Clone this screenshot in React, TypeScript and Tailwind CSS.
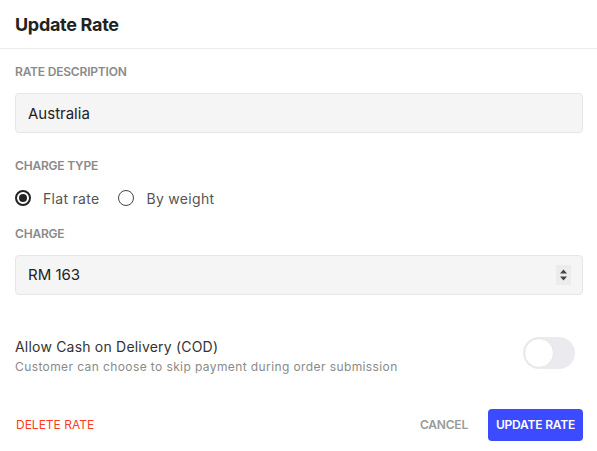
import React, { useState } from 'react';

const App: React.FC = () => {
  const [chargeType, setChargeType] = useState<'flat' | 'weight'>('flat');
  const [cod, setCod] = useState(false);

  return (
    <div className="w-[597px] h-[451px] bg-white font-['Inter',sans-serif] text-[#222]">
      <div className="h-[49px] border-b border-[#ececec] px-[15px] flex items-center">
        <h1 className="text-[18px] font-bold text-[#222] tracking-[-0.3px]">Update Rate</h1>
      </div>

      <div className="px-[15px]">
        <label className="block mt-[15px] h-4 leading-4 text-[12px] font-semibold text-[#8a8a8a] tracking-[-0.2px]">
          RATE DESCRIPTION
        </label>
        <input
          defaultValue="Australia"
          className="mt-[13px] block w-[568px] h-10 px-3 bg-[#f5f5f5] border border-[#e6e6e6] rounded-[4px] text-[15px] text-[#222] outline-none"
        />

        <label className="block mt-[25px] h-4 leading-4 text-[12px] font-semibold text-[#8a8a8a] tracking-[-0.2px]">
          CHARGE TYPE
        </label>
        <div className="mt-[14px] h-5 flex items-center">
          <button onClick={() => setChargeType('flat')} className="flex items-center">
            <span className="w-4 h-4 rounded-full border-2 border-[#222] flex items-center justify-center">
              {chargeType === 'flat' && <span className="w-2 h-2 rounded-full bg-[#222]" />}
            </span>
            <span className="ml-3 text-[14px] text-[#555] tracking-[0.3px]">Flat rate</span>
          </button>
          <button onClick={() => setChargeType('weight')} className="ml-[19px] flex items-center">
            <span className="w-4 h-4 rounded-full border-[1.5px] border-[#444] flex items-center justify-center">
              {chargeType === 'weight' && <span className="w-2 h-2 rounded-full bg-[#222]" />}
            </span>
            <span className="ml-3 text-[14px] text-[#555] tracking-[0.3px]">By weight</span>
          </button>
        </div>

        <label className="block mt-[18px] h-4 leading-4 text-[12px] font-semibold text-[#8a8a8a] tracking-[-0.2px]">
          CHARGE
        </label>
        <div className="mt-[13px] w-[568px] h-10 pl-3 pr-[11px] bg-[#f5f5f5] border border-[#e6e6e6] rounded-[4px] flex items-center justify-between">
          <span className="text-[15px] text-[#222]">RM 163</span>
          <span className="w-[15px] h-5 bg-[#ececec] flex items-center justify-center">
            <svg width="9" height="14" viewBox="0 0 9 14">
              <path d="M4.5 1.5 L8 5.5 L1 5.5 Z" fill="#444" />
              <path d="M4.5 12.5 L8 8.5 L1 8.5 Z" fill="#444" />
            </svg>
          </span>
        </div>

        <div className="mt-[42px] flex items-start justify-between">
          <div>
            <div className="h-5 leading-5 text-[14px] text-[#333] tracking-[0.2px]">Allow Cash on Delivery (COD)</div>
            <div className="mt-[2px] h-4 leading-4 text-[12px] text-[#8a8a8a] tracking-[0.4px]">
              Customer can choose to skip payment during order submission
            </div>
          </div>
          <button
            onClick={() => setCod(!cod)}
            className={`mr-[7px] w-[52px] h-[32px] rounded-full p-[1px] flex items-center ${cod ? 'bg-[#3d4bff] justify-end' : 'bg-[#ebebef] justify-start'}`}
          >
            <span className="w-[30px] h-[30px] rounded-full bg-white border border-[#e4e4ea]" />
          </button>
        </div>

        <div className="mt-[34px] flex items-center justify-between">
          <button className="ml-[1px] text-[12px] text-[#ff3b1f] tracking-[0px]">DELETE RATE</button>
          <div className="flex items-center -mr-px">
            <button className="text-[12px] font-semibold text-[#9a9a9a] tracking-[-0.2px]">CANCEL</button>
            <button className="ml-5 w-[95px] h-8 rounded-[4px] bg-[#3d4bff] text-white text-[12px] font-semibold tracking-[-0.2px]">
              UPDATE RATE
            </button>
          </div>
        </div>
      </div>
    </div>
  );
};

export default App;
